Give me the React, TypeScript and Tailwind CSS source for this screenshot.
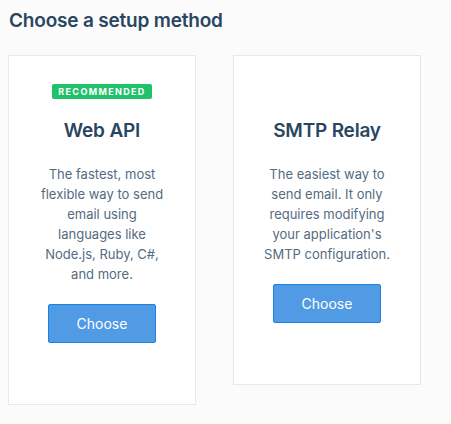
import React from "react";

const F = { fontFamily: 'Inter, "Noto Sans", sans-serif' };

function Card({
  badge,
  title,
  lines,
}: {
  badge: boolean;
  title: string;
  lines: string[];
}) {
  return (
    <div className="w-[188px] bg-white border border-[#e6e8eb] pt-[28px] pb-[61px] flex flex-col items-center">
      <div
        className={
          "h-[15px] px-[6px] rounded-[2px] flex items-center text-[9px] font-bold tracking-[0.15em] leading-none " +
          (badge ? "bg-[#1fc26b] text-white" : "invisible")
        }
      >
        RECOMMENDED
      </div>
      <h2 className="mt-[18px] text-[19px] leading-[28px] font-semibold text-[#294661] tracking-[-0.01em]">
        {title}
      </h2>
      <p className="mt-[19px] text-[13px] leading-[20px] text-[#546b81] text-center">
        {lines.map((l, i) => (
          <React.Fragment key={i}>
            {l}
            {i < lines.length - 1 && <br />}
          </React.Fragment>
        ))}
      </p>
      <button className="mt-[20px] w-[108px] h-[39px] bg-[#519be4] border border-[#1a82e2] rounded-[2px] text-white text-[14px]">
        Choose
      </button>
    </div>
  );
}

export default function App() {
  return (
    <div className="min-h-[424px] bg-[#fbfbfb] pl-[8px] pt-[9px]" style={F}>
      <h1 className="ml-[1px] text-[19px] leading-[24px] font-semibold text-[#294661] tracking-[-0.01em]">
        Choose a setup method
      </h1>
      <div className="mt-[22px] flex items-start gap-[37px]">
        <Card
          badge
          title="Web API"
          lines={[
            "The fastest, most",
            "flexible way to send",
            "email using",
            "languages like",
            "Node.js, Ruby, C#,",
            "and more.",
          ]}
        />
        <Card
          badge={false}
          title="SMTP Relay"
          lines={[
            "The easiest way to",
            "send email. It only",
            "requires modifying",
            "your application's",
            "SMTP configuration.",
          ]}
        />
      </div>
    </div>
  );
}
